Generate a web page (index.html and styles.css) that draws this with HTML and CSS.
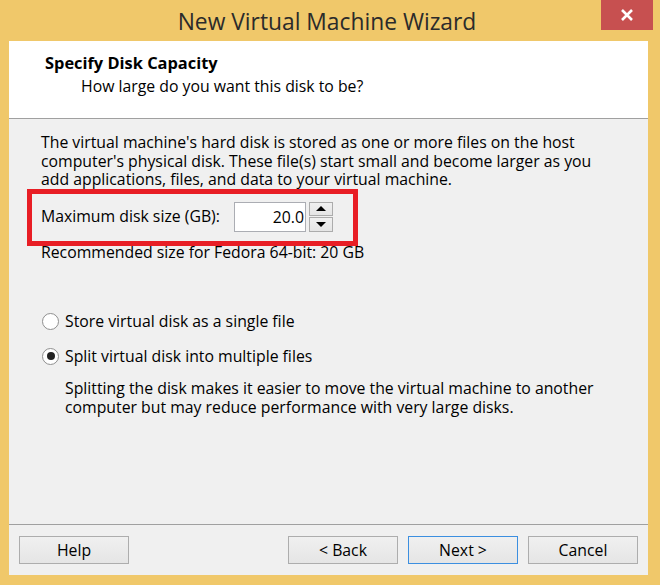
FILE: index.html
```html
<!DOCTYPE html>
<html lang="en">
<head>
  <meta charset="UTF-8">
  <title>New Virtual Machine Wizard</title>
  <link rel="stylesheet" href="styles.css">
</head>
<body>
<div class="window">
  <div class="titlebar">
    <span class="title">New Virtual Machine Wizard</span>
    <div class="close">
      <svg width="14" height="14" viewBox="0 0 14 14"><path d="M2 2 L12 12 M12 2 L2 12" stroke="#fff" stroke-width="2.6"/></svg>
    </div>
  </div>
  <div class="frame">
    <div class="header">
      <div class="heading">Specify Disk Capacity</div>
      <div class="subheading">How large do you want this disk to be?</div>
    </div>
    <div class="content">
      <p class="intro">The virtual machine's hard disk is stored as one or more files on the host<br>
        computer's physical disk. These file(s) start small and become larger as you<br>
        add applications, files, and data to your virtual machine.</p>
      <div class="size-row">
        <span class="size-label">Maximum disk size (GB):</span>
        <div class="spin-value">20.0</div>
        <div class="spin-buttons">
          <div class="spin-btn"><span class="arrow-up"></span></div>
          <div class="spin-btn"><span class="arrow-down"></span></div>
        </div>
        <div class="highlight"></div>
      </div>
      <div class="recommend">Recommended size for Fedora 64-bit: 20 GB</div>
      <div class="options">
        <div class="radio"><span class="radio-circle"></span>Store virtual disk as a single file</div>
        <div class="radio"><span class="radio-circle checked"></span>Split virtual disk into multiple files</div>
        <p class="note">Splitting the disk makes it easier to move the virtual machine to another<br>
          computer but may reduce performance with very large disks.</p>
      </div>
    </div>
    <div class="footer">
      <button class="btn">Help</button>
      <button class="btn back">&lt; Back</button>
      <button class="btn default">Next &gt;</button>
      <button class="btn">Cancel</button>
    </div>
  </div>
</div>
</body>
</html>
```

FILE: styles.css
```css
* {
  box-sizing: border-box;
}
body {
  margin: 0;
  background: #f0c86a;
  font-family: 'Open Sans', 'Noto Sans', sans-serif;
  font-size: 15.8px;
  color: #000;
}
.window {
  width: 660px;
  height: 585px;
}
.titlebar {
  position: relative;
  height: 41px;
  padding: 3px 6px 0 0;
  text-align: center;
}
.title {
  font-size: 22.8px;
  line-height: 38px;
  color: #2b2b2b;
}
.close {
  position: absolute;
  top: 0;
  right: 7px;
  width: 52px;
  height: 30px;
  background: #c75050;
  display: flex;
  align-items: center;
  justify-content: center;
}
.frame {
  margin-left: 9px;
  width: 639px;
  height: 534px;
  background: #f0f0f0;
  display: flex;
  flex-direction: column;
}
.header {
  height: 78px;
  background: #fff;
  border-bottom: 1px solid #a0a0a0;
  padding: 12px 0 0 36px;
  line-height: 19px;
}
.heading {
  font-weight: bold;
  font-size: 16.4px;
}
.subheading {
  margin: 5px 0 0 36px;
}
.content {
  height: 405px;
  padding: 14px 0 0 32px;
  line-height: 18.5px;
  white-space: nowrap;
}
.intro {
  margin: 0;
}
.size-row {
  position: relative;
  display: flex;
  align-items: center;
  margin-top: 13px;
  height: 30px;
}
.size-label {
  width: 193px;
}
.spin-value {
  width: 72px;
  height: 30px;
  border: 1px solid #abadb3;
  background: #fff;
  text-align: right;
  padding-right: 1px;
  line-height: 28px;
}
.spin-buttons {
  margin-left: 3px;
  display: flex;
  flex-direction: column;
  gap: 1px;
}
.spin-btn {
  width: 24px;
  height: 14.5px;
  border: 1px solid #acacac;
  background: linear-gradient(#f0f0f0, #e5e5e5);
  display: flex;
  align-items: center;
  justify-content: center;
}
.arrow-up {
  border-left: 5px solid transparent;
  border-right: 5px solid transparent;
  border-bottom: 5px solid #000;
}
.arrow-down {
  border-left: 5px solid transparent;
  border-right: 5px solid transparent;
  border-top: 5px solid #000;
}
.highlight {
  position: absolute;
  left: -14px;
  top: -13px;
  width: 331px;
  height: 57px;
  border: 5px solid #e81e25;
}
.recommend {
  margin-top: 11px;
}
.options {
  margin-top: 50px;
}
.radio {
  display: flex;
  align-items: center;
  height: 20px;
  margin-bottom: 15px;
}
.radio-circle {
  width: 17px;
  height: 17px;
  margin: 0 6px 0 1px;
  border: 1px solid #8f8f8f;
  border-radius: 50%;
  background: #fff;
  display: flex;
  align-items: center;
  justify-content: center;
}
.radio-circle.checked::after {
  content: '';
  width: 8px;
  height: 8px;
  border-radius: 50%;
  background: #222;
}
.note {
  margin: -2px 0 0 24px;
}
.footer {
  flex: 1;
  border-top: 1px solid #a0a0a0;
  padding: 11px 10px 0 10px;
  display: flex;
  align-items: flex-start;
  gap: 10px;
}
.btn {
  width: 110px;
  height: 28px;
  border: 1px solid #adadad;
  background: linear-gradient(#f0f0f0, #e5e5e5);
  font-family: inherit;
  font-size: 15.8px;
  color: #000;
  padding: 0;
}
.btn.back {
  margin-left: auto;
}
.btn.default {
  border-color: #3c8fe0;
}
```
